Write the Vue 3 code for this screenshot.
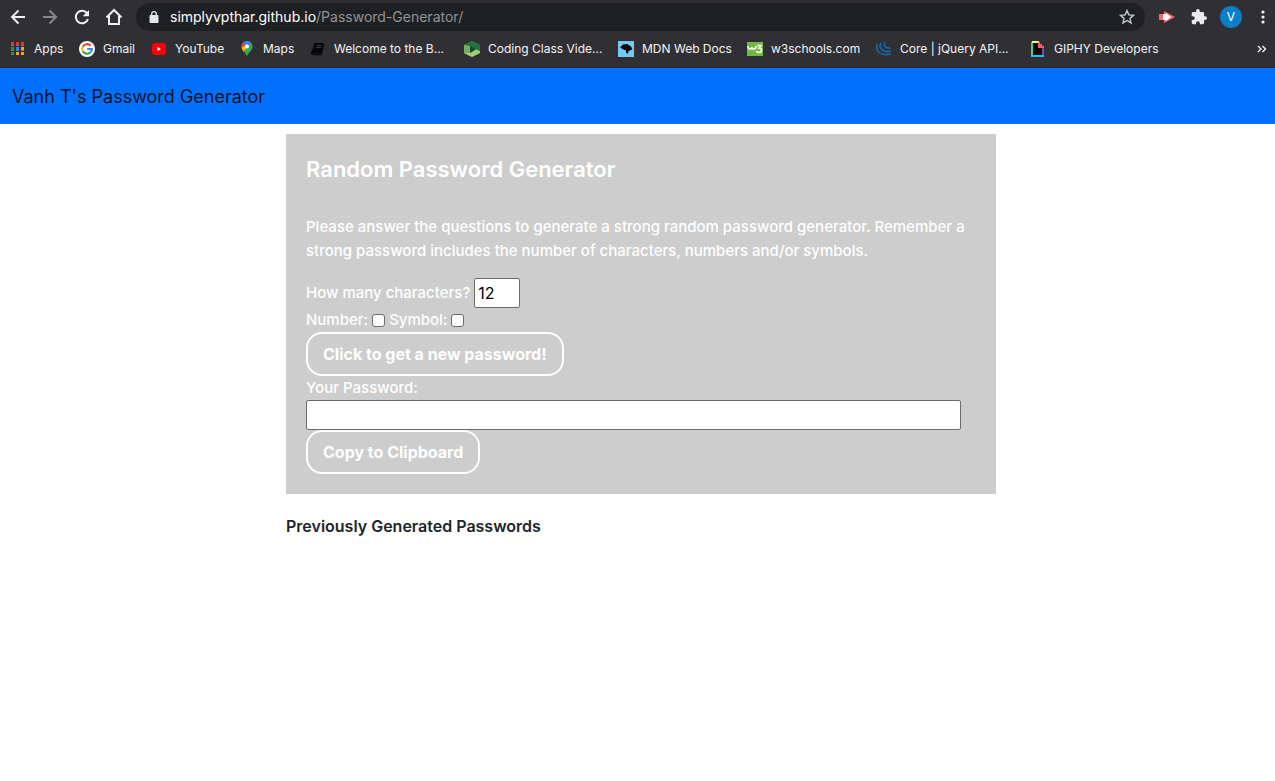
<script setup>
import { ref } from 'vue'

const length = ref(12)
const useNumber = ref(false)
const useSymbol = ref(false)
const password = ref('')
const history = ref([])

function generate() {
  let pool = 'abcdefghijklmnopqrstuvwxyzABCDEFGHIJKLMNOPQRSTUVWXYZ'
  if (useNumber.value) pool += '0123456789'
  if (useSymbol.value) pool += '!@#$%^&*()-_=+'
  let out = ''
  for (let i = 0; i < length.value; i++) out += pool[Math.floor(Math.random() * pool.length)]
  password.value = out
  history.value.push(out)
}

function copy() {
  navigator.clipboard?.writeText(password.value)
}
</script>

<template>
  <div class="window">
    <header class="chrome">
      <div class="toolbar">
        <button class="tool" aria-label="Back">
          <svg width="16" height="16" viewBox="0 0 16 16" fill="none" stroke="#f1f1f3" stroke-width="2"><path d="M15 8H2.5M8.5 1.5L2 8l6.500 6.500" /></svg>
        </button>
        <button class="tool" aria-label="Forward">
          <svg width="16" height="16" viewBox="0 0 16 16" fill="none" stroke="#88888b" stroke-width="2"><path d="M1 8h12.500M7.500 1.500L14 8l-6.500 6.500" /></svg>
        </button>
        <button class="tool" aria-label="Reload">
          <svg width="16" height="16" viewBox="0 0 16 16"><path d="M13.300 4.400A6.300 6.300 0 1 0 14 10.200" fill="none" stroke="#f1f1f3" stroke-width="2" /><path d="M15 1v6.300H8.700z" fill="#f1f1f3" /></svg>
        </button>
        <button class="tool" aria-label="Home">
          <svg width="18" height="18" viewBox="0 0 18 18" fill="none" stroke="#f1f1f3" stroke-width="2"><path d="M1.500 9.500L9 2l7.500 7.500M4 8v8h10V8" /></svg>
        </button>
        <div class="address">
          <svg width="10" height="12" viewBox="0 0 10 12"><rect x="0.500" y="4" width="9" height="8" rx="1" fill="#e4e5e7" /><path d="M2.700 4.500V3a2.300 2.300 0 0 1 4.600 0v1.500" fill="none" stroke="#e4e5e7" stroke-width="1.300" /></svg>
          <span class="url">simplyvpthar.github.io<span class="path">/Password-Generator/</span></span>
          <button class="star" aria-label="Bookmark this page">
            <svg width="16" height="16" viewBox="0 0 16 16"><path d="M8 1.600l1.850 4.300 4.650.4-3.520 3.070 1.050 4.560L8 11.500l-4.030 2.430 1.050-4.560L1.500 6.300l4.650-.4z" fill="none" stroke="#c8c9cc" stroke-width="1.400" /></svg>
          </button>
        </div>
        <button class="tool" aria-label="Extension">
          <svg width="16" height="14" viewBox="0 0 16 14"><path d="M0 4h5V1l11 6-11 6v-3H0z" fill="#f8686c" /><path d="M4 4h3V3l5 4-5 4v-1H4z" fill="#fff" /></svg>
        </button>
        <button class="tool" aria-label="Extensions">
          <svg width="16" height="16" viewBox="1 1 22 22" fill="#e9eaed"><path d="M20.500 11H19V7c0-1.100-.9-2-2-2h-4V3.500a2.500 2.500 0 0 0-5 0V5H4c-1.100 0-2 .9-2 2v3.800h1.500a2.700 2.700 0 0 1 0 5.400H2V20c0 1.100.9 2 2 2h3.800v-1.500a2.700 2.700 0 0 1 5.400 0V22H17c1.100 0 2-.9 2-2v-4h1.500a2.500 2.500 0 0 0 0-5z" /></svg>
        </button>
        <button class="tool" aria-label="Profile"><span class="avatar">V</span></button>
        <button class="tool menu" aria-label="Menu">
          <svg width="4" height="14" viewBox="0 0 4 14" fill="#f1f1f3"><circle cx="2" cy="2" r="1.600" /><circle cx="2" cy="7" r="1.600" /><circle cx="2" cy="12" r="1.600" /></svg>
        </button>
      </div>

      <nav class="bookmarks" aria-label="Bookmarks">
        <a href="#">
          <svg width="16" height="16" viewBox="0 0 16 16">
            <path d="M1 1h3v3H1zM6 1h3v3H6zM11 1h3v3h-3z" fill="#f9282d" />
            <path d="M1 6h3v3H1zM1 11h3v3H1z" fill="#219653" /><path d="M6 6h3v3H6z" fill="#1a8cff" /><path d="M11 6h3v3h-3zM6 11h3v3H6zM11 11h3v3h-3z" fill="#fba026" />
            <path d="M1 4h3v1H1zM6 4h3v1H6zM11 4h3v1h-3zM1 9h3v1H1zM6 9h3v1H6zM11 9h3v1h-3z" fill="#77797c" />
          </svg>
          <span>Apps</span>
        </a>
        <a href="#">
          <svg width="16" height="16" viewBox="0 0 16 16"><circle cx="8" cy="8" r="8" fill="#fff" /><g fill="none" stroke-width="2.200"><path d="M11.600 4.800A4.800 4.800 0 0 0 3.800 5.700" stroke="#ea4335" /><path d="M3.800 5.700a4.800 4.800 0 0 0 0 4.600" stroke="#fbbc05" /><path d="M3.800 10.300a4.800 4.800 0 0 0 7.400 1.200" stroke="#34a853" /><path d="M11.200 11.500A4.800 4.800 0 0 0 12.800 8H8.200" stroke="#4285f4" /></g></svg>
          <span>Gmail</span>
        </a>
        <a href="#">
          <svg width="16" height="16" viewBox="0 0 16 16"><rect x="1" y="2" width="14" height="12" rx="3" fill="#fb0007" /><path d="M6.500 6v4L10 8z" fill="#fff" /></svg>
          <span>YouTube</span>
        </a>
        <a href="#">
          <svg width="16" height="16" viewBox="0 0 16 16"><path d="M8 16c0-3-5.500-6-5.500-10.500A5.500 5.500 0 0 1 8 0a5.500 5.500 0 0 1 5.500 5.500C13.500 10 8.500 12 8 16z" fill="#34a853" /><path d="M3.700 2A5.500 5.500 0 0 1 12 1.700L8 6.500z" fill="#3b82ef" /><path d="M3.700 2A5.500 5.500 0 0 0 2.600 6.500L6.500 5.500 7 4.500z" fill="#ea4335" /><path d="M2.600 6.500C2.900 8 3.800 9.500 4.700 10.600L8.500 6 6.500 4.500z" fill="#fbbc04" /><circle cx="8" cy="5.500" r="2" fill="#fff" /></svg>
          <span>Maps</span>
        </a>
        <a href="#">
          <svg width="16" height="16" viewBox="0 0 16 16"><path d="M4.500 2H13.500L11 12.500H2.500q-1-.5-.6-1.800z" fill="#050506" /><path d="M1.500 10.500q-.5 3 1.500 3h8l2.800-10" fill="none" stroke="#08080a" stroke-width="1.400" /><path d="M6.500 4.500h5M6 6.500h5" stroke="#393a3e" stroke-width="1" /></svg>
          <span>Welcome to the B...</span>
        </a>
        <a href="#">
          <svg width="16" height="16" viewBox="0 0 16 16"><path d="M8 0l8 4v8l-8 4-8-4V4z" fill="#4d9c50" /><path d="M8 0L0 4l6 1.500V5l6 3 4 4V4z" fill="#27713d" /><path d="M0 4v8l6 0V5z" fill="#76b068" /><path d="M0 12l8 4 8-4v-2l-4-1.500L6 12z" fill="#a3cf78" /><path d="M6 4.500l6 3.700L6 12z" fill="#174b30" /></svg>
          <span>Coding Class Vide...</span>
        </a>
        <a href="#">
          <svg width="16" height="16" viewBox="0 0 16 16"><path d="M0 0h16v16H0z" fill="#75c8ee" /><path d="M2 6.500L5 3.500 9 3l4 2.500 1.500 3-2 .5-1 1-1-.3-.5 3.300-2-1.500V9.500L5.500 8.500z" fill="#050708" /></svg>
          <span>MDN Web Docs</span>
        </a>
        <a href="#">
          <svg width="16" height="16" viewBox="0 0 16 16"><path d="M0 1h16v14H0z" fill="#72b943" /><path d="M1 5q0 3 2 3t2-2q0 2 2 2t2-3" fill="none" stroke="#fff" stroke-width="1.500" /><path d="M10 4.500h4L12 7q2.500 0 2.500 2.200T12 11.500q-2 0-2.500-1.500" fill="none" stroke="#fff" stroke-width="1.600" /></svg>
          <span>w3schools.com</span>
        </a>
        <a href="#">
          <svg width="16" height="16" viewBox="0 0 16 16" fill="none" stroke="#1768a5" stroke-width="1.700"><path d="M1.500 3q-2 5 1.500 8.500t12 1.500" /><path d="M5 2q-2 4 1 6.800t9 1.200" /><path d="M9 1.500q-1.500 2.500.5 4.300t5 1" /></svg>
          <span>Core | jQuery API...</span>
        </a>
        <a href="#">
          <svg width="16" height="16" viewBox="0 0 16 16"><path d="M3 2h7v4h4v8H3z" fill="#08090a" /><path d="M1 1h2v14H1z" fill="#35d69a" /><path d="M2 0h7v2H2z" fill="#fff48b" /><path d="M1 14h13v2H1z" fill="#15c5f2" /><path d="M12 6h2v8h-2z" fill="#7b42b5" /><path d="M8 1h2v2h2v2h2v2H8z" fill="#f75d66" /></svg>
          <span>GIPHY Developers</span>
        </a>
        <button class="more" aria-label="More bookmarks">
          <svg width="10" height="8" viewBox="0 0 10 8" fill="none" stroke="#f1f1f3" stroke-width="1.400"><path d="M1 1l3 3-3 3M5.500 1l3 3-3 3" /></svg>
        </button>
      </nav>
    </header>

    <nav class="navbar"><a href="#">Vanh T's Password Generator</a></nav>

    <main>
      <section class="card">
        <h1>Random Password Generator</h1>
        <p>Please answer the questions to generate a strong random password generator. Remember a strong password includes the number of characters, numbers and/or symbols.</p>
        <div class="row count">
          <label for="length">How many characters?</label>
          <input id="length" v-model="length" type="number" min="8" max="128" />
        </div>
        <div class="row">
          <label for="number">Number:</label>
          <input id="number" v-model="useNumber" type="checkbox" />
          <label for="symbol">Symbol:</label>
          <input id="symbol" v-model="useSymbol" type="checkbox" />
        </div>
        <button class="action" @click="generate">Click to get a new password!</button>
        <label class="result-label" for="result">Your Password:</label>
        <input id="result" v-model="password" class="result" type="text" />
        <button class="action" @click="copy">Copy to Clipboard</button>
      </section>
      <h2>Previously Generated Passwords</h2>
      <ul v-if="history.length">
        <li v-for="(item, i) in history" :key="i">{{ item }}</li>
      </ul>
    </main>
  </div>
</template>

<style>
body {
  margin: 0;
  background: #fff;
}
</style>

<style scoped>
.window {
  font-family: Inter, "Liberation Sans", sans-serif;
  font-size: 15px;
  line-height: 24px;
  color: #212529;
}
* {
  box-sizing: border-box;
}
button,
input {
  font: inherit;
}
svg {
  display: block;
  flex: none;
}
a {
  color: inherit;
  text-decoration: none;
}

.chrome {
  height: 68px;
  background: #303034;
  border-bottom: 1px solid #222831;
  color: #f4f4f5;
}
.toolbar {
  display: flex;
  align-items: center;
  height: 34px;
  padding-left: 2px;
}
.tool,
.star,
.more {
  display: flex;
  align-items: center;
  justify-content: center;
  flex: none;
  height: 28px;
  padding: 0;
  border: 0;
  background: none;
  color: inherit;
}
.tool {
  width: 32px;
}
.menu {
  width: 28px;
  padding-left: 4px;
}
.address {
  display: flex;
  align-items: center;
  flex: 1;
  height: 28px;
  margin: 0 6px;
  padding: 0 10px 0 13px;
  border-radius: 14px;
  background: #1f2023;
}
.url {
  flex: 1;
  margin-left: 11px;
  font-size: 14px;
  color: #fff;
}
.path {
  color: #929396;
}
.avatar {
  width: 22px;
  height: 22px;
  border-radius: 50%;
  background: #0780c9;
  color: #fff;
  font-size: 12px;
  line-height: 22px;
}
.bookmarks {
  display: grid;
  grid-template-columns: 69px 72px 88px 71px 154px 154px 129px 129px 154px auto 1fr;
  align-items: center;
  height: 30px;
  padding: 0 8px 0 10px;
  font-size: 12px;
  line-height: 16px;
}
.bookmarks a {
  display: flex;
  align-items: center;
  gap: 8px;
  white-space: nowrap;
}
.more {
  justify-self: end;
}

.navbar {
  padding: 17px 12px 15px;
  background: #0070ff;
  color: #061326;
  font-size: 18px;
}
.navbar a {
  display: block;
}
main {
  width: 100%;
  max-width: 717px;
  margin: 10px auto 0;
  padding-left: 7px;
}
.card {
  padding: 20px;
  background: #cdcdcd;
  color: #fff;
  font-weight: 500;
}
h1 {
  margin: 0 0 31px;
  font-size: 22px;
  line-height: 30px;
  font-weight: 600;
}
p {
  margin: 0 0 15px;
}
.row {
  display: flex;
  align-items: center;
  gap: 4px;
  height: 24px;
}
.count {
  height: 30px;
}
input {
  border: 1px solid #6b6b6b;
  border-radius: 2px;
  background: #fff;
  color: #000;
  font-weight: 400;
}
#length {
  width: 46px;
  height: 30px;
  padding: 1px 3px;
  font-size: 16px;
}
input[type="checkbox"] {
  appearance: none;
  width: 13px;
  height: 13px;
  margin: 0;
  border-radius: 3px;
}
input[type="checkbox"]:checked {
  background: #0075ff;
}
.action {
  display: block;
  height: 44px;
  padding: 0 15px;
  border: 2px solid #fff;
  border-radius: 16px;
  background: none;
  color: #fff;
  font-size: 16px;
  font-weight: 700;
}
.result-label {
  display: block;
}
.result {
  display: block;
  width: calc(100% - 15px);
  height: 30px;
  padding: 1px 3px;
}
h2 {
  margin: 20px 0 0;
  font-size: 16px;
  line-height: 24px;
  font-weight: 600;
}
</style>
